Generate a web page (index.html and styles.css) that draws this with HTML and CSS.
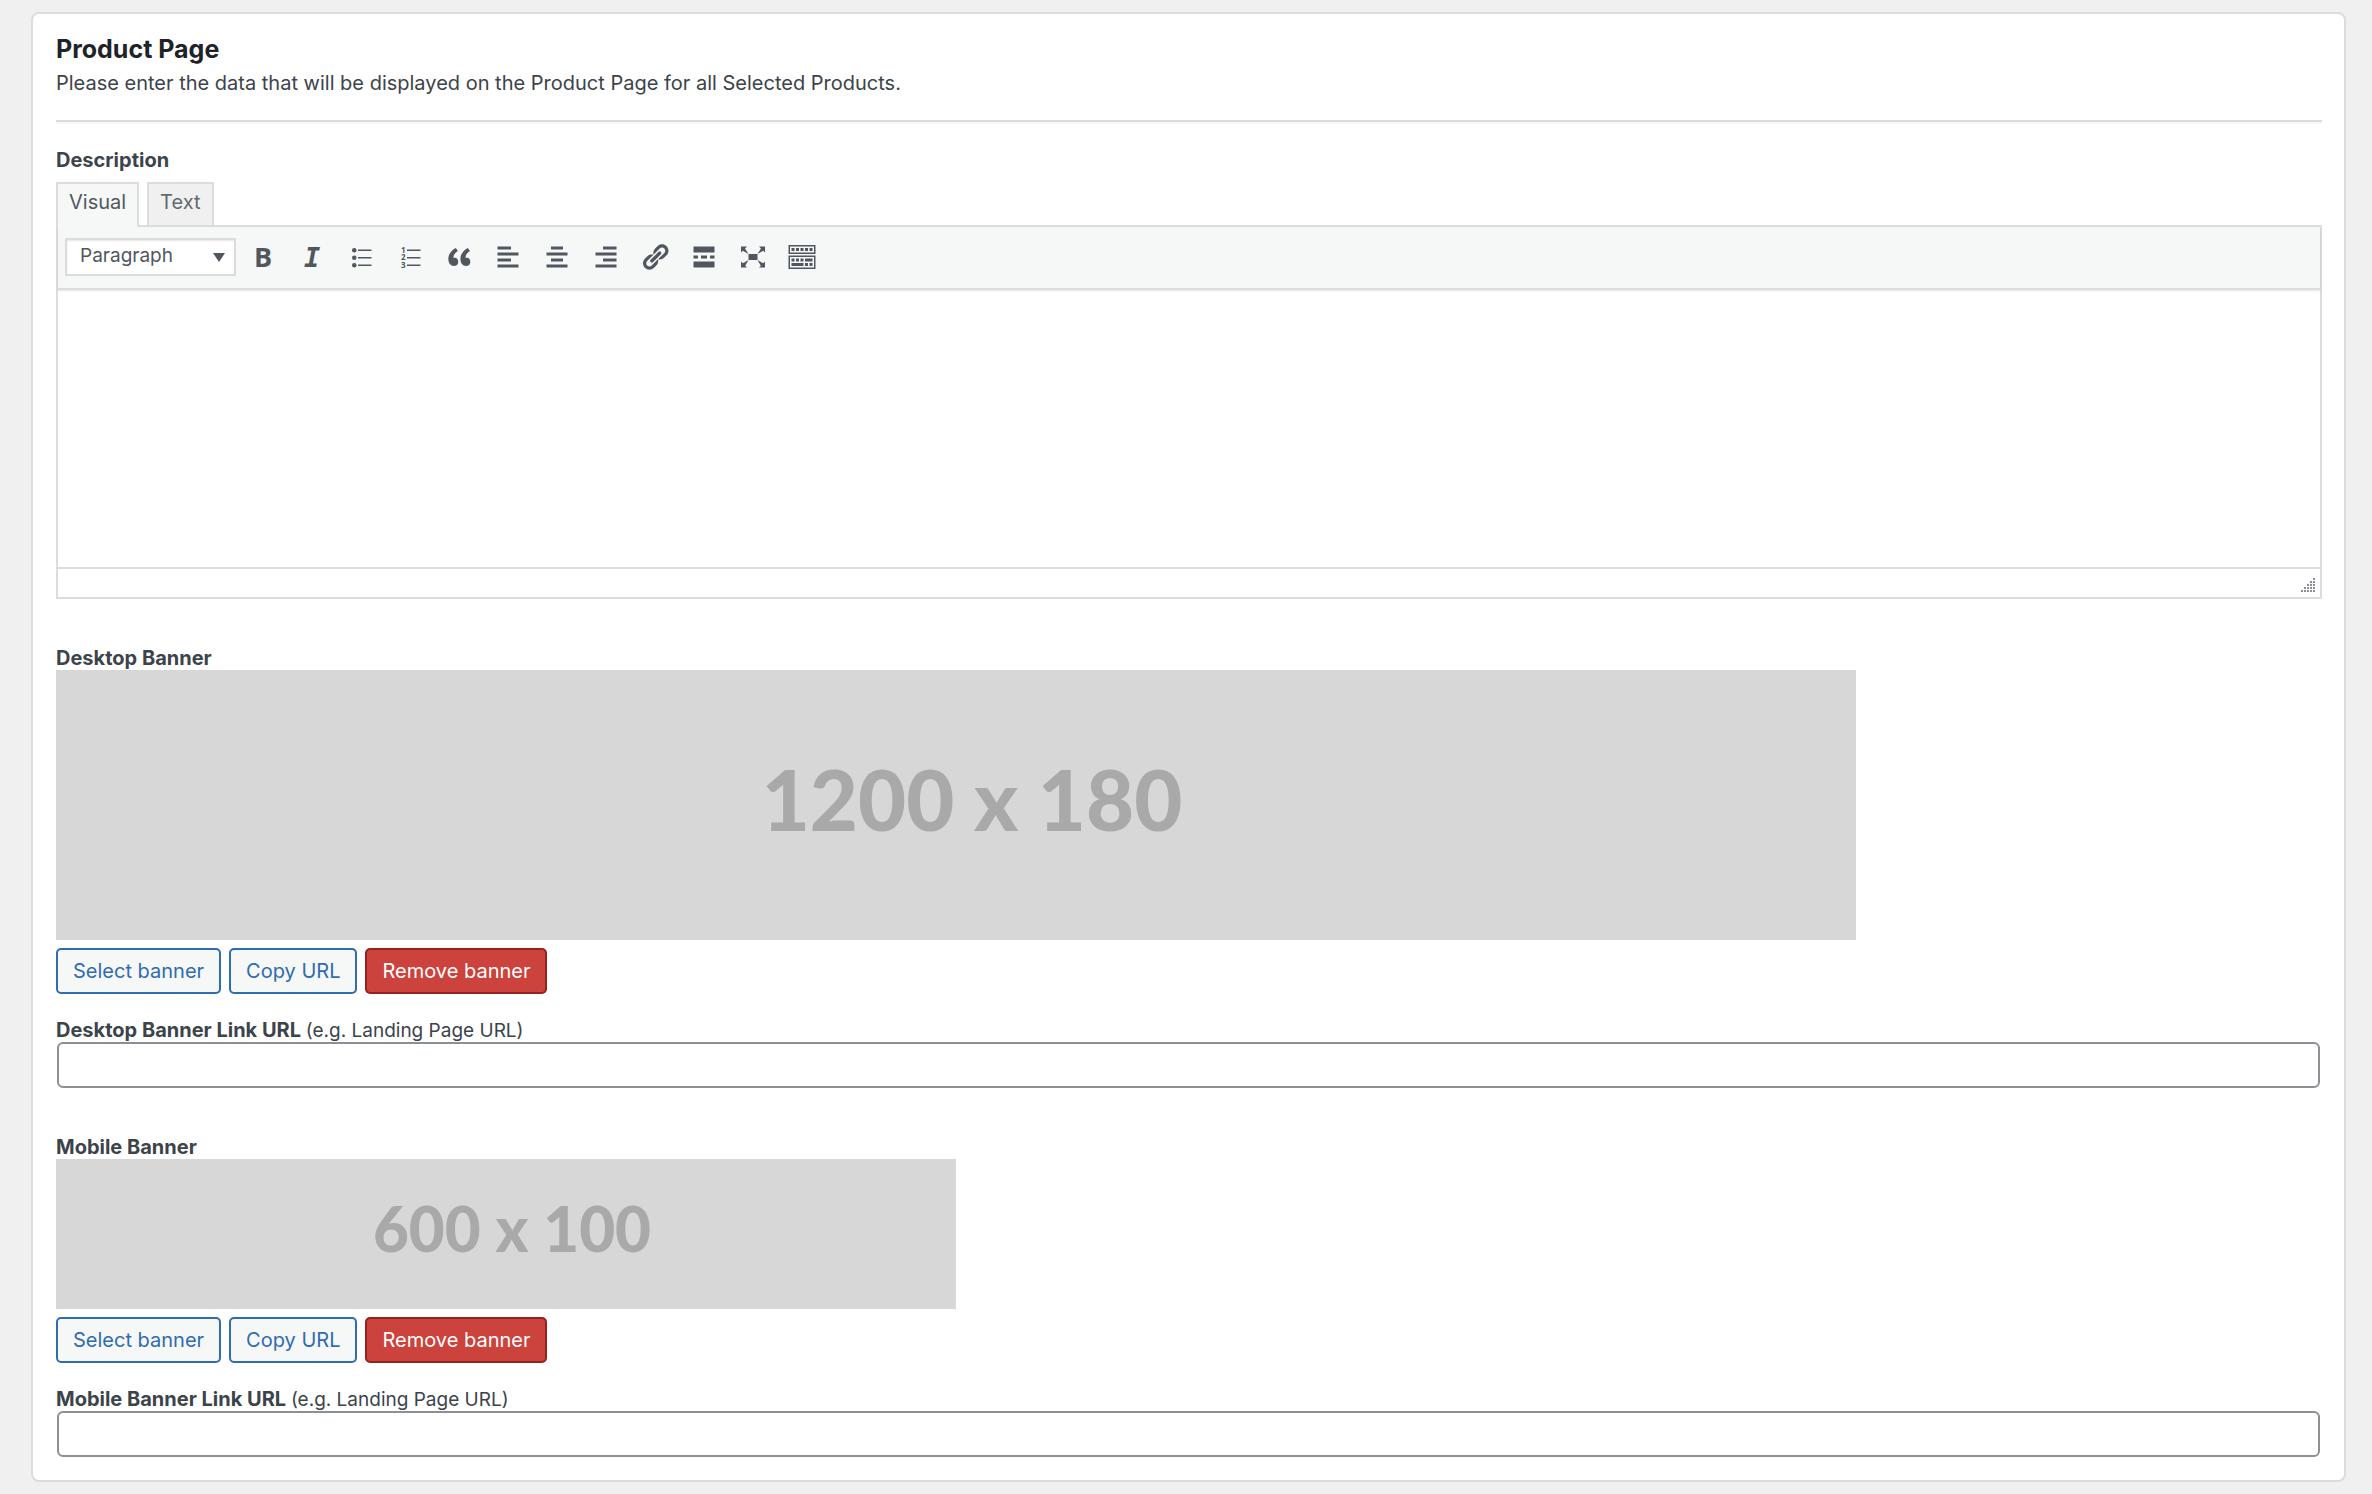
FILE: index.html
```html
<!DOCTYPE html>
<html lang="en">
<head>
    <meta charset="utf-8">
    <title>Product Page</title>
    <link rel="stylesheet" href="styles.css">
</head>
<body>
    <form class="card">
        <h2>Product Page</h2>
        <p class="intro">Please enter the data that will be displayed on the Product Page for all Selected Products.</p>
        <hr>

        <label class="field-label" for="description">Description</label>
        <div class="tabs">
            <button type="button" class="tab active">Visual</button>
            <button type="button" class="tab">Text</button>
        </div>
        <div class="editor">
            <div class="toolbar">
                <div class="format">
                    <select aria-label="Format">
                        <option>Paragraph</option>
                        <option>Heading 1</option>
                        <option>Heading 2</option>
                        <option>Preformatted</option>
                    </select>
                </div>
                <button type="button" class="tool" aria-label="Bold">
                    <svg viewBox="0 0 30 30"><text class="glyph-bold" x="6" y="25">B</text></svg>
                </button>
                <button type="button" class="tool" aria-label="Italic">
                    <svg viewBox="0 0 30 30"><text class="glyph-italic" x="7" y="25">I</text></svg>
                </button>
                <button type="button" class="tool" aria-label="Bulleted list">
                    <svg viewBox="0 0 20 20"><circle cx="5.5" cy="5.5" r="1.5"/><circle cx="5.5" cy="10.5" r="1.5"/><circle cx="5.5" cy="15.5" r="1.5"/><path d="M8 5h9v1H8zM8 10h9v1H8zM8 15h9v1H8z"/></svg>
                </button>
                <button type="button" class="tool" aria-label="Numbered list">
                    <svg viewBox="0 0 30 30"><g class="glyph-number"><text x="6" y="11">1</text><text x="6" y="18">2</text><text x="6" y="26">3</text></g><path d="M12 7.5h13.500V9H12zM12 15h13.500v1.500H12zM12 22.500h13.500V24H12z"/></svg>
                </button>
                <button type="button" class="tool" aria-label="Blockquote">
                    <svg viewBox="0 0 20 20"><path d="M9.490 13.220c0-.74-.2-1.380-.61-1.900-.62-.78-1.830-.88-2.530-.72-.29-1.650 1.110-3.750 2.920-4.650L7.880 4c-2.730 1.300-5.420 4.280-4.960 8.050C3.210 14.430 4.590 16 6.540 16c.85 0 1.560-.25 2.120-.75s.83-1.180.83-2.030zm8.050 0c0-.74-.2-1.380-.61-1.900-.63-.78-1.830-.88-2.530-.72-.29-1.650 1.110-3.750 2.920-4.650L15.930 4c-2.730 1.300-5.410 4.280-4.950 8.050.28 2.380 1.660 3.950 3.610 3.950.85 0 1.560-.25 2.120-.75s.83-1.180.83-2.030z"/></svg>
                </button>
                <button type="button" class="tool" aria-label="Align left">
                    <svg viewBox="0 0 20 20"><path d="M12 5V3H3v2h9zm5 4V7H3v2h14zm-5 4v-2H3v2h9zm5 4v-2H3v2h14z"/></svg>
                </button>
                <button type="button" class="tool" aria-label="Align center">
                    <svg viewBox="0 0 20 20"><path d="M14 5V3H6v2h8zm3 4V7H3v2h14zm-3 4v-2H6v2h8zm3 4v-2H3v2h14z"/></svg>
                </button>
                <button type="button" class="tool" aria-label="Align right">
                    <svg viewBox="0 0 20 20"><path d="M17 5V3H8v2h9zm0 4V7H3v2h14zm0 4v-2H8v2h9zm0 4v-2H3v2h14z"/></svg>
                </button>
                <button type="button" class="tool" aria-label="Insert link">
                    <svg viewBox="0 0 20 20"><path d="M17.740 2.760c1.680 1.690 1.680 4.410 0 6.100l-1.530 1.520c-1.120 1.120-2.700 1.470-4.140 1.090l2.620-2.610.76-.77.76-.76c.84-.84.84-2.200 0-3.040-.84-.85-2.200-.85-3.040 0l-.77.76-3.380 3.380c-.37-1.440-.02-3.020 1.100-4.140l1.520-1.530c1.690-1.680 4.420-1.680 6.100 0zM8.590 13.430l5.340-5.340c.42-.42.42-1.100 0-1.520-.44-.43-1.130-.39-1.530 0l-5.330 5.340c-.42.42-.42 1.100 0 1.520.44.43 1.130.39 1.520 0zm-.76 2.290l4.140-4.150c.38 1.440.03 3.020-1.090 4.140l-1.520 1.530c-1.690 1.680-4.410 1.680-6.100 0-1.680-1.680-1.680-4.420 0-6.100l1.530-1.520c1.120-1.120 2.700-1.470 4.140-1.100l-4.140 4.150c-.85.84-.85 2.200 0 3.050.84.84 2.200.84 3.040 0z"/></svg>
                </button>
                <button type="button" class="tool" aria-label="Read more">
                    <svg viewBox="0 0 20 20"><path d="M17 7V3H3v4h14zM6 11V9H3v2h3zm6 0V9H8v2h4zm5 0V9h-3v2h3zm0 6v-4H3v4h14z"/></svg>
                </button>
                <button type="button" class="tool" aria-label="Fullscreen">
                    <svg viewBox="0 0 20 20"><path d="M7 8h6v4H7zm-5 5v4h4l-1.200-1.200L7 12l-3.800 2.200M14 17h4v-4l-1.200 1.200L13 12l2.200 3.800M14 3l1.300 1.300L13 8l3.800-2.200L18 7V3M6 3H2v4l1.200-1.200L7 8 4.700 4.300"/></svg>
                </button>
                <button type="button" class="tool" aria-label="Toolbar toggle">
                    <svg viewBox="0 0 20 20"><path d="M19 2v6H1V2h18zm-1 5V3H2v4h16zM5 4v2H3V4h2zm3 0v2H6V4h2zm3 0v2H9V4h2zm3 0v2h-2V4h2zm3 0v2h-2V4h2zm2 5v9H1V9h18zm-1 8v-7H2v7h16zM5 11v2H3v-2h2zm3 0v2H6v-2h2zm3 0v2H9v-2h2zm6 0v2h-5v-2h5zm-6 3v2H3v-2h8zm3 0v2h-2v-2h2zm3 0v2h-2v-2h2z"/></svg>
                </button>
            </div>
            <textarea id="description"></textarea>
            <div class="statusbar">
                <svg class="resize" viewBox="0 0 14 14"><path d="M12 0h2v2h-2zM9 3h2v2H9zM12 3h2v2h-2zM6 6h2v2H6zM9 6h2v2H9zM12 6h2v2h-2zM3 9h2v2H3zM6 9h2v2H6zM9 9h2v2H9zM12 9h2v2h-2zM0 12h2v2H0zM3 12h2v2H3zM6 12h2v2H6zM9 12h2v2H9zM12 12h2v2h-2z"/></svg>
            </div>
        </div>

        <section class="banner-field">
            <h3 class="field-label">Desktop Banner</h3>
            <div class="banner desktop">1200 x 180</div>
            <div class="buttons">
                <button type="button">Select banner</button>
                <button type="button">Copy URL</button>
                <button type="button" class="remove">Remove banner</button>
            </div>
            <label class="field-label" for="desktop-url">Desktop Banner Link URL <small>(e.g. Landing Page URL)</small></label>
            <input type="text" id="desktop-url">
        </section>

        <section class="banner-field">
            <h3 class="field-label">Mobile Banner</h3>
            <div class="banner mobile">600 x 100</div>
            <div class="buttons">
                <button type="button">Select banner</button>
                <button type="button">Copy URL</button>
                <button type="button" class="remove">Remove banner</button>
            </div>
            <label class="field-label" for="mobile-url">Mobile Banner Link URL <small>(e.g. Landing Page URL)</small></label>
            <input type="text" id="mobile-url">
        </section>
    </form>
</body>
</html>
```
FILE: styles.css
```css
* {
    box-sizing: border-box;
}

body {
    margin: 0;
    padding: 12px 26px 12px 31px;
    background-color: #f0f0f0;
    color: #3c434a;
    font-family: Inter, "Liberation Sans", sans-serif;
    font-size: 20px;
    line-height: 24px;
}

button, input, select, textarea {
    font: inherit;
    color: inherit;
}

.card {
    padding: 23px 22px 23px 23px;
    background: #fff;
    border: 2px solid #dcdcde;
    border-radius: 8px;
}

h2 {
    margin: 0 0 10px;
    color: #1d2327;
    font-size: 25px;
    font-weight: 700;
    line-height: 24px;
}

.intro {
    margin: 0;
}

hr {
    height: 4px;
    margin: 25px 0 24px;
    border: 0;
    border-top: 2px solid #dcdcde;
    background: #f6f7f7;
}

.field-label {
    display: block;
    margin: 0;
    font-size: 20px;
    font-weight: 700;
}

.field-label small {
    font-size: 19px;
    font-weight: 400;
    line-height: 20px;
}

/* Editor */
.tabs {
    display: flex;
    gap: 8px;
    margin-top: 10px;
}

.tab {
    height: 43px;
    padding: 0 11px 5px;
    border: 2px solid #dcdcde;
    border-bottom: 0;
    background: #f0f0f1;
    color: #646970;
}

.tab.active {
    z-index: 1;
    height: 45px;
    margin-bottom: -2px;
    padding-bottom: 7px;
    background: #f6f7f7;
    color: #50575e;
}

.editor {
    border: 2px solid #dcdcde;
}

.toolbar {
    display: flex;
    align-items: center;
    gap: 3px;
    height: 63px;
    padding: 0 7px 2px;
    border-bottom: 2px solid #dcdcde;
    background: #f6f7f7;
    box-shadow: 0 1px 2px rgba(0, 0, 0, 0.1);
}

.format {
    position: relative;
    margin-right: 1px;
}

.format select {
    display: block;
    width: 171px;
    height: 38px;
    padding: 0 13px 2px;
    appearance: none;
    border: 2px solid #dcdcde;
    border-radius: 0;
    background: #fff;
    box-shadow: inset 0 1px 2px rgba(0, 0, 0, 0.1);
    color: #50575e;
    font-size: 19px;
}

.format::after {
    content: "";
    position: absolute;
    top: 15px;
    right: 11px;
    border: 6px solid transparent;
    border-top: 9px solid #50575e;
    border-bottom: 0;
    pointer-events: none;
}

.tool {
    width: 46px;
    height: 40px;
    padding: 5px 8px;
    border: 0;
    background: none;
}

.tool svg {
    display: block;
    width: 30px;
    height: 30px;
    overflow: visible;
    fill: #50575e;
}

.glyph-bold {
    font: bold 27px "Open Sans", sans-serif;
}

.glyph-italic {
    font: italic bold 27px "DejaVu Sans Mono", monospace;
}

.glyph-number {
    font: bold 8px "Open Sans", sans-serif;
}

.editor textarea {
    display: block;
    width: 100%;
    height: 277px;
    padding: 14px;
    border: 0;
    resize: none;
    background: transparent;
}

.statusbar {
    display: flex;
    justify-content: flex-end;
    align-items: flex-end;
    height: 30px;
    padding: 5px;
    border-top: 2px solid #dcdcde;
}

.resize {
    width: 14px;
    height: 14px;
    fill: #8c8f94;
}

/* Banners */
.banner-field {
    margin-top: 47px;
}

.banner {
    display: flex;
    align-items: center;
    justify-content: center;
    max-width: 100%;
    background: #d7d7d7;
    color: #a9a9a9;
    font-family: Lato, "Open Sans", sans-serif;
    font-weight: 900;
}

.desktop {
    width: 1800px;
    height: 270px;
    padding: 0 0 12px 32px;
    font-size: 83px;
}

.mobile {
    width: 900px;
    height: 150px;
    padding: 0 0 12px 12px;
    font-size: 62px;
}

.buttons {
    display: flex;
    gap: 8px;
    margin: 8px 0 24px;
}

.buttons button {
    height: 46px;
    padding: 0 15px;
    border: 2px solid #2f6cb0;
    border-radius: 5px;
    background: #f6f7f7;
    color: #2f6cb0;
}

.buttons .remove {
    border-color: #942320;
    background: #cc423c;
    color: #fff;
}

input[type="text"] {
    display: block;
    width: calc(100% - 3px);
    height: 46px;
    margin: 0 1px;
    padding: 0 12px;
    border: 2px solid #8c8f94;
    border-radius: 6px;
    background: #fff;
}
```
